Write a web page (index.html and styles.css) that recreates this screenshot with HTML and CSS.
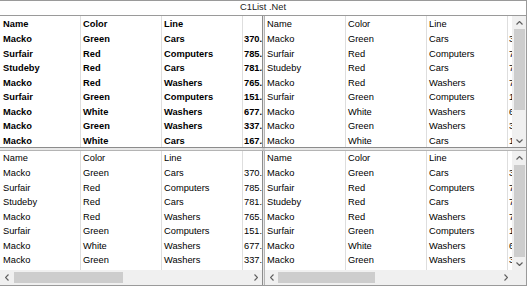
FILE: index.html
```html
<!DOCTYPE html>
<html lang="en">
<head>
  <meta charset="UTF-8">
  <title>C1List .Net</title>
  <link rel="stylesheet" href="styles.css">
</head>
<body>
  <div class="window">
    <div class="title">C1List .Net</div>

    <div class="panes">
      <!-- top left: bold, no scrollbars -->
      <div class="pane pane-tl bold">
        <div class="view">
          <div class="list" id="listTL"></div>
        </div>
      </div>
      <div class="vsplit"></div>
      <!-- top right: vertical scrollbar only -->
      <div class="pane pane-tr">
        <div class="view">
          <div class="list" id="listTR"></div>
          <div class="vbar">
            <div class="arrow"><svg width="7" height="4"><polyline points="0.5,3.5 3.5,0.5 6.5,3.5" /></svg></div>
            <div class="track"><div class="thumb thumb-tr"></div></div>
            <div class="arrow"><svg width="7" height="4"><polyline points="0.5,0.5 3.5,3.5 6.5,0.5" /></svg></div>
          </div>
        </div>
      </div>

      <div class="hsplit"></div>
      <div class="hsplit cross"></div>
      <div class="hsplit"></div>

      <!-- bottom left: horizontal scrollbar only -->
      <div class="pane pane-bl">
        <div class="view">
          <div class="list" id="listBL"></div>
        </div>
        <div class="hbar">
          <div class="arrow"><svg width="4" height="7"><polyline points="3.5,0.5 0.5,3.5 3.5,6.5" /></svg></div>
          <div class="track"><div class="thumb thumb-bl"></div></div>
          <div class="arrow"><svg width="4" height="7"><polyline points="0.5,0.5 3.5,3.5 0.5,6.5" /></svg></div>
        </div>
      </div>
      <div class="vsplit"></div>
      <!-- bottom right: both scrollbars -->
      <div class="pane pane-br">
        <div class="view">
          <div class="list" id="listBR"></div>
          <div class="vbar">
            <div class="arrow"><svg width="7" height="4"><polyline points="0.5,3.5 3.5,0.5 6.5,3.5" /></svg></div>
            <div class="track"><div class="thumb thumb-br"></div></div>
            <div class="arrow"><svg width="7" height="4"><polyline points="0.5,0.5 3.5,3.5 6.5,0.5" /></svg></div>
          </div>
        </div>
        <div class="hbar">
          <div class="arrow"><svg width="4" height="7"><polyline points="3.5,0.5 0.5,3.5 3.5,6.5" /></svg></div>
          <div class="track"><div class="thumb thumb-br-h"></div></div>
          <div class="arrow"><svg width="4" height="7"><polyline points="0.5,0.5 3.5,3.5 0.5,6.5" /></svg></div>
          <div class="corner"></div>
        </div>
      </div>
    </div>
  </div>

  <script>
    const rows = [
      ['Macko', 'Green', 'Cars', '370.25'],
      ['Surfair', 'Red', 'Computers', '785.10'],
      ['Studeby', 'Red', 'Cars', '781.40'],
      ['Macko', 'Red', 'Washers', '765.75'],
      ['Surfair', 'Green', 'Computers', '151.30'],
      ['Macko', 'White', 'Washers', '677.05'],
      ['Macko', 'Green', 'Washers', '337.90'],
      ['Macko', 'White', 'Cars', '167.45']
    ];

    function renderList(id) {
      const list = document.getElementById(id);
      const header = ['Name', 'Color', 'Line', ''];
      let html = '<div class="row head">';
      header.forEach((h) => { html += '<div class="cell">' + h + '</div>'; });
      html += '</div>';
      rows.forEach((r) => {
        html += '<div class="row">';
        r.forEach((c) => { html += '<div class="cell">' + c + '</div>'; });
        html += '</div>';
      });
      list.innerHTML = html;
    }

    ['listTL', 'listTR', 'listBL', 'listBR'].forEach(renderList);
  </script>
</body>
</html>
```

FILE: styles.css
```css
body {
  margin: 0;
  font-family: "Liberation Sans", Arial, sans-serif;
  font-size: 9.3px;
  color: #000;
  background: #fff;
}

.window {
  width: 527px;
  height: 286px;
  box-sizing: border-box;
  border-top: 1px solid #9a9a9a;
  border-right: 1px solid #9a9a9a;
  border-bottom: 1px solid #9a9a9a;
  display: flex;
  flex-direction: column;
  overflow: hidden;
}

.title {
  height: 14px;
  line-height: 13px;
  text-align: center;
  color: #222;
  border-bottom: 1px solid #9a9a9a;
}

.panes {
  flex: 1;
  display: grid;
  grid-template-columns: 262px 3px 1fr;
  grid-template-rows: 131px 4px 1fr;
  min-height: 0;
}

.vsplit {
  background: #e8e8e8;
  border-left: 1px solid #8c8c8c;
  border-right: 1px solid #b4b4b4;
}

.hsplit {
  background: #e8e8e8;
  border-top: 1px solid #8c8c8c;
  border-bottom: 1px solid #b4b4b4;
}

.hsplit.cross {
  background: #d0d0d0;
}

.pane {
  display: flex;
  flex-direction: column;
  overflow: hidden;
  min-width: 0;
  min-height: 0;
}

.view {
  flex: 1;
  display: flex;
  overflow: hidden;
  min-height: 0;
}

.list {
  flex: 1;
  overflow: hidden;
  min-width: 0;
}

.row {
  display: flex;
  height: 14.5px;
  line-height: 14.5px;
  white-space: nowrap;
}

.row.head {
  height: 16px;
  line-height: 16px;
}

.pane-bl .row.head,
.pane-br .row.head {
  height: 15px;
  line-height: 14px;
}

.cell {
  flex: 0 0 81px;
  box-sizing: border-box;
  padding-left: 2px;
  border-right: 1px solid #dedede;
  overflow: hidden;
}

.pane-tl .cell:first-child,
.pane-bl .cell:first-child {
  padding-left: 3px;
}

.cell:last-child {
  padding-left: 1px;
}

.bold {
  font-weight: bold;
}

/* scrollbars */
.vbar {
  flex: 0 0 14px;
  display: flex;
  flex-direction: column;
  background: #f0f0f0;
}

.hbar {
  flex: 0 0 15px;
  display: flex;
  background: #f0f0f0;
}

.arrow {
  flex: 0 0 13px;
  display: flex;
  align-items: center;
  justify-content: center;
}

.arrow svg polyline {
  fill: none;
  stroke: #606060;
  stroke-width: 1.2;
}

.track {
  flex: 1;
  display: flex;
}

.vbar .track {
  flex-direction: column;
}

.thumb {
  background: #cdcdcd;
}

.vbar .thumb {
  margin: 0 1px 0 2px;
}

.hbar .thumb {
  margin: 2px 0;
}

.thumb-tr {
  height: 81px;
}

.thumb-br {
  margin-top: 1px !important;
  height: 92px;
}

.thumb-bl {
  margin-left: 1px !important;
  width: 109px;
}

.thumb-br-h {
  width: 97px;
}

.corner {
  flex: 0 0 14px;
  background: #f0f0f0;
}
```
